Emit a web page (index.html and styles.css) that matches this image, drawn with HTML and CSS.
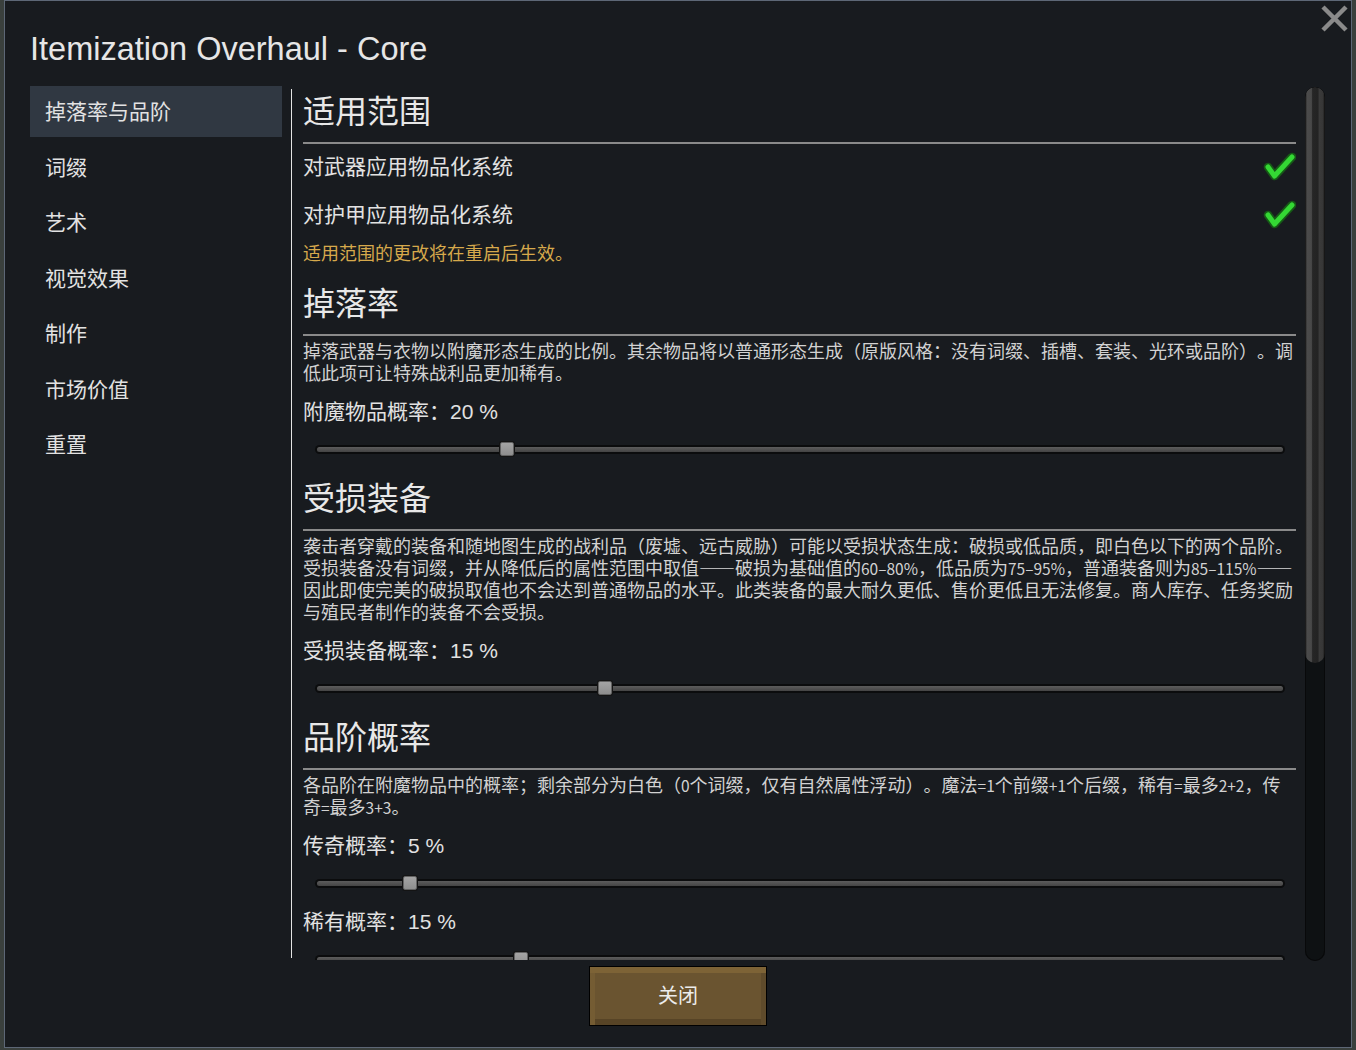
FILE: index.html
```html
<!DOCTYPE html>
<html lang="zh-CN">
<head>
<meta charset="utf-8">
<title>Itemization Overhaul - Core</title>
<link rel="stylesheet" href="styles.css">
</head>
<body>
<div class="window">
  <svg class="close-x" width="27" height="27" viewBox="0 0 27 27" aria-label="关闭">
    <path d="M2 2 L25 25 M25 2 L2 25" stroke="#8a8a8a" stroke-width="4.5" fill="none"/>
  </svg>

  <div class="title">Itemization Overhaul - Core</div>

  <div class="main">
    <nav class="sidebar">
      <div class="nav-item active">掉落率与品阶</div>
      <div class="nav-item">词缀</div>
      <div class="nav-item">艺术</div>
      <div class="nav-item">视觉效果</div>
      <div class="nav-item">制作</div>
      <div class="nav-item">市场价值</div>
      <div class="nav-item">重置</div>
    </nav>

    <div class="divider"></div>

    <div class="content">
      <section class="section first">
        <h2 class="heading">适用范围</h2>
        <div class="toggle-row">
          <span class="toggle-text">对武器应用物品化系统</span>
          <svg class="check" width="34" height="32" viewBox="0 0 34 32">
            <path d="M5 15 L11.5 24 L29 5" stroke="#165a16" stroke-width="8.5" fill="none" stroke-linejoin="round" stroke-linecap="round"/>
            <path d="M5 15 L11.5 24 L29 5" stroke="#34d834" stroke-width="5" fill="none" stroke-linejoin="round" stroke-linecap="round"/>
          </svg>
        </div>
        <div class="toggle-row">
          <span class="toggle-text">对护甲应用物品化系统</span>
          <svg class="check" width="34" height="32" viewBox="0 0 34 32">
            <path d="M5 15 L11.5 24 L29 5" stroke="#165a16" stroke-width="8.5" fill="none" stroke-linejoin="round" stroke-linecap="round"/>
            <path d="M5 15 L11.5 24 L29 5" stroke="#34d834" stroke-width="5" fill="none" stroke-linejoin="round" stroke-linecap="round"/>
          </svg>
        </div>
        <div class="warning">适用范围的更改将在重启后生效。</div>
      </section>

      <section class="section">
        <h2 class="heading">掉落率</h2>
        <p class="desc">掉落武器与衣物以附魔形态生成的比例。其余物品将以普通形态生成（原版风格：没有词缀、插槽、套装、光环或品阶）。调低此项可让特殊战利品更加稀有。</p>
        <div class="label">附魔物品概率：20 %</div>
        <div class="slider"><div class="track"><div class="thumb" style="left:190px"></div></div></div>
      </section>

      <section class="section">
        <h2 class="heading">受损装备</h2>
        <p class="desc">袭击者穿戴的装备和随地图生成的战利品（废墟、远古威胁）可能以受损状态生成：破损或低品质，即白色以下的两个品阶。受损装备没有词缀，并从降低后的属性范围中取值——破损为基础值的<span class="num">60–80%</span>，低品质为<span class="num">75–95%</span>，普通装备则为<span class="num">85–115%</span>——因此即使完美的破损取值也不会达到普通物品的水平。此类装备的最大耐久更低、售价更低且无法修复。商人库存、任务奖励与殖民者制作的装备不会受损。</p>
        <div class="label">受损装备概率：15 %</div>
        <div class="slider"><div class="track"><div class="thumb" style="left:288px"></div></div></div>
      </section>

      <section class="section">
        <h2 class="heading">品阶概率</h2>
        <p class="desc">各品阶在附魔物品中的概率；剩余部分为白色（<span class="num">0</span>个词缀，仅有自然属性浮动）。魔法<span class="num">=1</span>个前缀<span class="num">+1</span>个后缀，稀有<span class="num">=</span>最多<span class="num">2+2</span>，传奇<span class="num">=</span>最多<span class="num">3+3</span>。</p>
        <div class="label">传奇概率：5 %</div>
        <div class="slider"><div class="track"><div class="thumb" style="left:93px"></div></div></div>
        <div class="label after-slider">稀有概率：15 %</div>
        <div class="slider"><div class="track"><div class="thumb" style="left:204px"></div></div></div>
      </section>
    </div>

    <div class="scrollbar"><div class="scroll-thumb"></div></div>
  </div>

  <button class="close-btn">关闭</button>
</div>
</body>
</html>
```

FILE: styles.css
```css
html, body {
  margin: 0;
  padding: 0;
}

body {
  width: 1356px;
  height: 1050px;
  overflow: hidden;
  background: #3a403d;
  font-family: "Liberation Sans", "Noto Sans CJK SC", sans-serif;
  color: #e2e2e2;
  text-spacing-trim: space-all;
}

.window {
  position: relative;
  margin-left: 4px;
  width: 1348px;
  height: 1048px;
  box-sizing: border-box;
  border: 1px solid #5d6776;
  background: #181b1f;
  display: flex;
  flex-direction: column;
  padding: 0 25px 21px 25px;
}

.close-x {
  position: absolute;
  top: 4px;
  right: 3px;
}

.title {
  height: 85px;
  box-sizing: border-box;
  padding: 28px 0 0 0;
  font-size: 32.5px;
  line-height: 40px;
  color: #e6e6e6;
}

.main {
  display: flex;
  height: 874px;
}

/* left category list */
.sidebar {
  width: 252px;
  flex-shrink: 0;
}

.nav-item {
  height: 51px;
  line-height: 51px;
  margin-bottom: 4.5px;
  padding-left: 15px;
  font-size: 21px;
  color: #e2e2e2;
}

.nav-item.active {
  background: #303842;
}

.divider {
  width: 1px;
  flex-shrink: 0;
  margin: 3px 11px 2px 9px;
  background: #e4e4e4;
}

/* settings column */
.content {
  width: 993px;
  flex-shrink: 0;
  overflow: hidden;
  padding-top: 2px;
}

.section {
  margin-top: 7px;
}

.section.first {
  margin-top: 0;
}

.section.first + .section {
  margin-top: 12px;
}

.heading {
  margin: 0;
  font-size: 32px;
  font-weight: normal;
  line-height: 48px;
  padding-bottom: 6px;
  border-bottom: 2px solid #8a8a8a;
  color: #e8e8e8;
}

.toggle-row {
  height: 48px;
  display: flex;
  align-items: center;
  justify-content: space-between;
  font-size: 21px;
}

.toggle-text {
  line-height: 28px;
  margin-top: -3px;
}

.check {
  margin-right: -1px;
}

.warning {
  height: 28px;
  line-height: 28px;
  font-size: 18px;
  color: #d6a94c;
}

.desc {
  margin: 3px 0 11px 0;
  font-family: "Noto Sans CJK SC", "Liberation Sans", sans-serif;
  font-size: 18px;
  line-height: 22px;
  color: #d2d2d2;
}

/* numbers inside the descriptions use a smaller size */
.desc .num {
  font-size: 15.5px;
  line-height: 1;
}

.label {
  height: 36px;
  line-height: 36px;
  font-size: 21px;
}

.label.after-slider {
  margin-top: 2px;
}

.slider {
  height: 38px;
  display: flex;
  align-items: center;
  padding: 0 13px 0 14px;
}

.track {
  position: relative;
  flex: 1;
  height: 5px;
  border-radius: 3px;
  background: linear-gradient(#5c5c5c, #444444);
  box-shadow: 0 0 0 2px #0b0c0d;
}

.thumb {
  position: absolute;
  top: 50%;
  width: 14px;
  height: 14px;
  box-sizing: border-box;
  transform: translate(-50%, -50%);
  background: linear-gradient(#a4a4a4, #8e8e8e);
  border: 1px solid #626262;
  border-radius: 2px;
  box-shadow: 0 0 0 1px #141414;
}

/* vertical scrollbar */
.scrollbar {
  width: 20px;
  flex-shrink: 0;
  margin: 1px 0 -1px 9px;
  border-radius: 10px;
  background: #0e1113;
  box-shadow: inset 0 0 0 1px #08090a;
  overflow: hidden;
}

.scroll-thumb {
  height: 576px;
  border-radius: 10px;
  background: linear-gradient(to right,
    #0d0d0d 0%, #4b4b4b 10%, #484848 32%, #262626 38%,
    #232323 64%, #3a3a3a 72%, #363636 90%, #0d0d0d 100%);
}

/* bottom action button */
.close-btn {
  align-self: center;
  margin-top: 6px;
  width: 178px;
  height: 60px;
  box-sizing: border-box;
  border: 1px solid #000;
  padding: 0;
  background: #6a5430;
  box-shadow:
    inset 0 6px 0 #7d6336,
    inset 5px 0 0 #745c33,
    inset -5px 0 0 #5f4b2b,
    inset 0 -6px 0 #574426;
  font-family: "Liberation Sans", "Noto Sans CJK SC", sans-serif;
  font-size: 20px;
  color: #ececec;
  line-height: 58px;
}
```
